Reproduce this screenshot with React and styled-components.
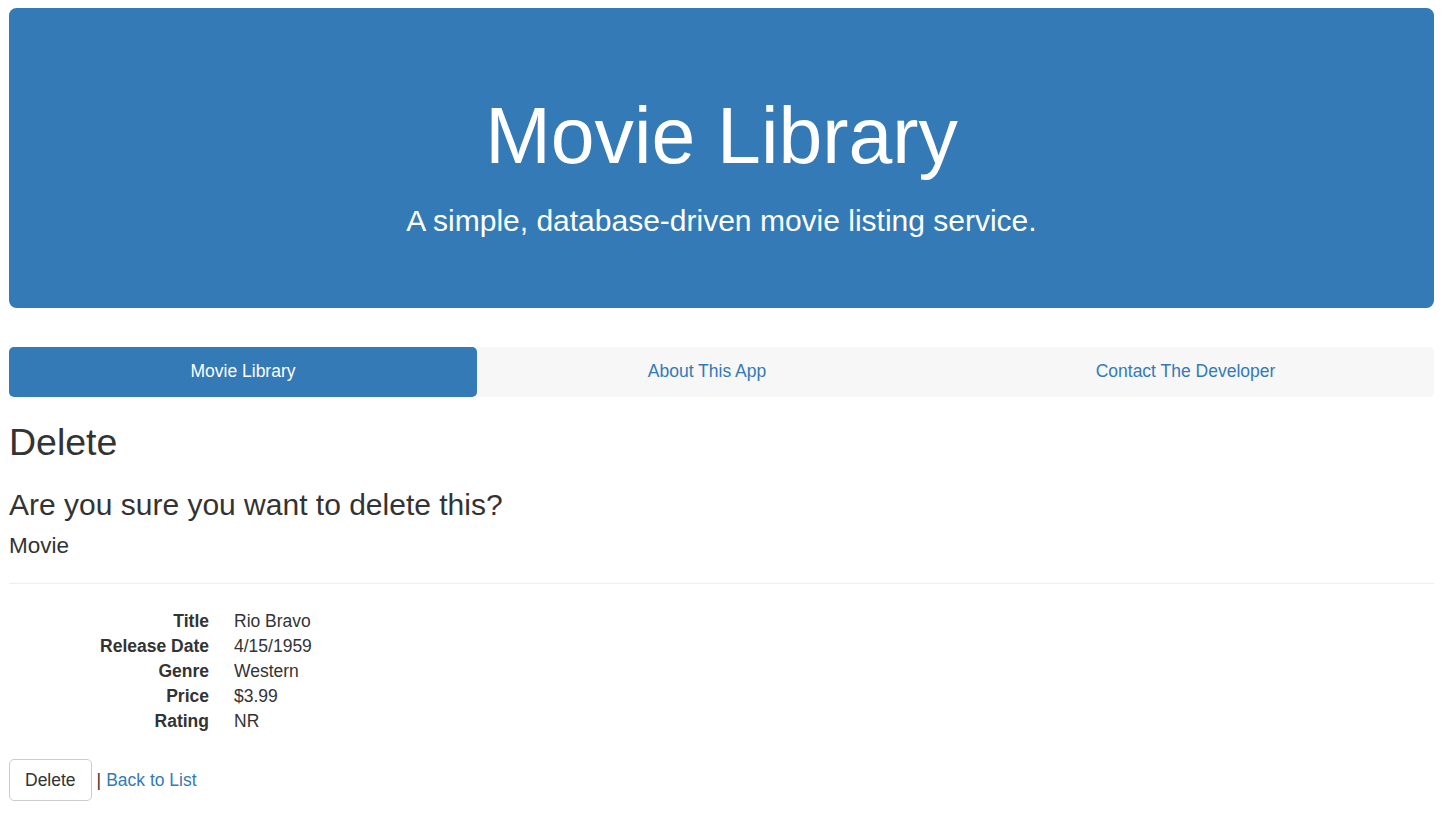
import React from "react"
import styled, { createGlobalStyle } from "styled-components"

const GlobalStyles = createGlobalStyle`
  * {
    box-sizing: border-box;
  }
  body {
    margin: 0;
    background: #fff;
    color: #333;
    font-family: "Liberation Sans", Arial, Helvetica, sans-serif;
    font-size: 17.5px;
    line-height: 1.42857;
  }
  a {
    color: #337ab7;
    text-decoration: none;
  }
`

const Page = styled.div`
  padding: 8px 11px 0 9px;
`

const Jumbotron = styled.header`
  background: #337ab7;
  color: #fff;
  border-radius: 7.5px;
  padding: 60px 75px;
  margin-bottom: 38.5px;
  text-align: center;

  h1 {
    margin: 25px 0 0;
    font-size: 78.75px;
    font-weight: 500;
    line-height: 1.1;
  }

  p {
    margin: 20px 0 6px;
    font-size: 30px;
    line-height: 1.42857;
  }
`

const Nav = styled.nav`
  display: grid;
  grid-template-columns: 468fr 460fr 497fr;
  background: #f7f7f7;
  border-radius: 5px;
`

const Pill = styled.a`
  display: block;
  padding: 12.5px 18.75px;
  line-height: 25px;
  text-align: center;
  border-radius: 5px;
  color: ${(p) => (p.$active ? "#fff" : "#337ab7")};
  background: ${(p) => (p.$active ? "#337ab7" : "transparent")};
`

const Heading = styled.h2`
  margin: 25px 0 12.5px;
  font-size: 37.5px;
  font-weight: 500;
  line-height: 1.1;
`

const Question = styled.h3`
  margin: 25px 0 12.5px;
  font-size: 30px;
  font-weight: 500;
  line-height: 1.1;
`

const Subject = styled.h4`
  margin: 12.5px 0;
  font-size: 22.5px;
  font-weight: 500;
  line-height: 1.1;
`

const Rule = styled.hr`
  margin: 25px 0;
  border: 0;
  border-top: 1px solid #eee;
`

const Details = styled.dl`
  display: grid;
  grid-template-columns: 200px 1fr;
  column-gap: 25px;
  margin: 0 0 25px;
  line-height: 25px;

  dt {
    font-weight: 700;
    text-align: right;
    white-space: nowrap;
  }

  dd {
    margin: 0;
  }
`

const Actions = styled.div`
  display: flex;
  align-items: center;
  gap: 5px;
`

const Button = styled.button`
  font: inherit;
  color: #333;
  background: #fff;
  border: 1px solid #ccc;
  border-radius: 5px;
  padding: 7.5px 15px;
  line-height: 25px;
  cursor: pointer;
`

const movie = [
  ["Title", "Rio Bravo"],
  ["Release Date", "4/15/1959"],
  ["Genre", "Western"],
  ["Price", "$3.99"],
  ["Rating", "NR"],
]

export default function App() {
  return (
    <>
      <GlobalStyles />
      <Page>
        <Jumbotron>
          <h1>Movie Library</h1>
          <p>A simple, database-driven movie listing service.</p>
        </Jumbotron>
        <Nav>
          <Pill href="#" $active>
            Movie Library
          </Pill>
          <Pill href="#">About This App</Pill>
          <Pill href="#">Contact The Developer</Pill>
        </Nav>
        <Heading>Delete</Heading>
        <Question>Are you sure you want to delete this?</Question>
        <div>
          <Subject>Movie</Subject>
          <Rule />
          <Details>
            {movie.map(([label, value]) => (
              <React.Fragment key={label}>
                <dt>{label}</dt>
                <dd>{value}</dd>
              </React.Fragment>
            ))}
          </Details>
          <Actions>
            <Button type="button">Delete</Button>
            <span>|</span>
            <a href="#">Back to List</a>
          </Actions>
        </div>
      </Page>
    </>
  )
}
